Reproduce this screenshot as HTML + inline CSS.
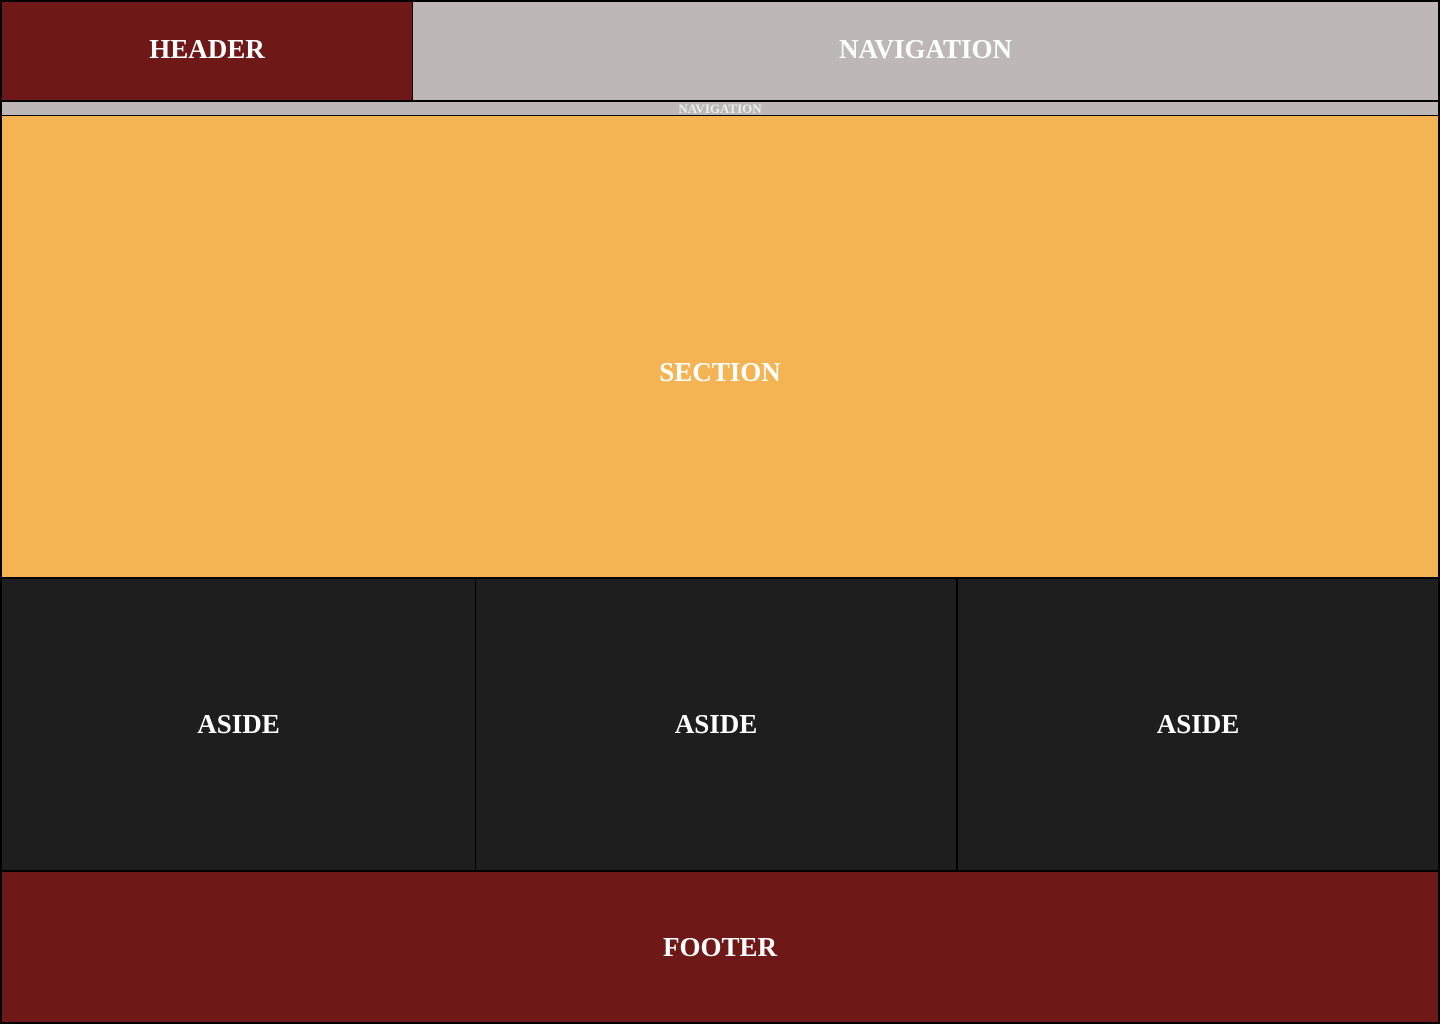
<!DOCTYPE html>
<html><head><meta charset="utf-8"><style>
html,body{margin:0;padding:0;width:1440px;height:1024px;background:#000;overflow:hidden}
div{position:absolute;display:flex;align-items:center;justify-content:center;color:#fff;font-family:"Liberation Serif",serif;font-weight:bold;font-size:27px;box-sizing:border-box}
</style></head><body>
<div style="left:2px;top:2px;width:410px;height:98px;background:#6e1818;padding-bottom:4px">HEADER</div>
<div style="left:413px;top:2px;width:1025px;height:98px;background:#bdb8b7;padding-bottom:4px">NAVIGATION</div>
<div style="left:2px;top:102px;width:1436px;height:13px;background:#bdb8b7;font-size:13px;color:#eee;line-height:13px">NAVIGATION</div>
<div style="left:2px;top:116px;width:1436px;height:461px;background:#f5b454;padding-top:52px">SECTION</div>
<div style="left:2px;top:579px;width:473px;height:291px;background:#1e1e1e">ASIDE</div>
<div style="left:476px;top:579px;width:480px;height:291px;background:#1e1e1e">ASIDE</div>
<div style="left:958px;top:579px;width:480px;height:291px;background:#1e1e1e">ASIDE</div>
<div style="left:2px;top:872px;width:1436px;height:150px;background:#6e1818">FOOTER</div>
</body></html>
